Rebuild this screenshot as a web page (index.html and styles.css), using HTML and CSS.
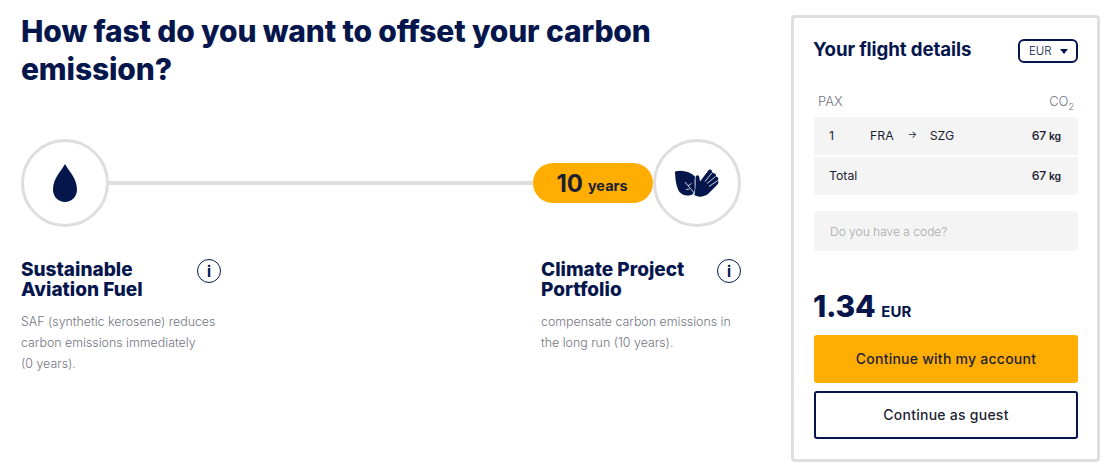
FILE: index.html
```html
<!DOCTYPE html>
<html lang="en">
<head>
<meta charset="utf-8">
<title>Offset</title>
<link rel="stylesheet" href="styles.css">
</head>
<body>
<div class="page">
  <main class="main">
    <h1 class="title">How fast do you want to offset your carbon emission?</h1>
    <div class="slider">
      <div class="circle">
        <svg class="drop" viewBox="0 0 24 38" width="24" height="38"><path d="M12 0C15 6 24 14 24 25.500C24 33 18.500 38 12 38S0 33 0 25.500C0 14 9 6 12 0Z"/></svg>
      </div>
      <div class="track"></div>
      <div class="pill"><span class="pill-num">10</span> <span class="pill-unit">years</span></div>
      <div class="circle">
        <svg class="hands" viewBox="0 0 44 28" width="44" height="28">
          <path d="M0 2.500C7 0.500 15 2.500 20 7.500C19.500 11 19.500 13 19.800 17C20 20.500 19.500 23 18 25C14 27.500 8 27 4.500 23C1 18 0.200 9 0 2.500Z"/>
          <path d="M20.500 8.500C21 5.500 23.800 5.500 24.300 8L25 12.500L33.500 1.300C35.300 -0.300 37.500 1 36.800 3L38.500 4.200C40.500 4 41.500 5.800 40.800 7.500C43 7.500 44 9.800 42.800 11.500C44 13.200 43.500 15 42 16L33.500 24.500C29 28.500 22 28.500 19 25.500C21 21 20.500 14 20.500 8.500Z"/>
          <path class="hands-gap" d="M10 13L20 25M13 17L16.500 14.500M14.500 20L11 20.500M30 12.500L36.800 4M32 14.500L40.500 7.500M34 17.500L42.500 11.800"/>
        </svg>
      </div>
    </div>
    <div class="options">
      <section class="option">
        <div class="option-head">
          <h2 class="option-title">Sustainable Aviation&nbsp;Fuel</h2>
          <span class="info">i</span>
        </div>
        <p class="option-text">SAF (synthetic kerosene) reduces carbon emissions immediately<br>(0 years).</p>
      </section>
      <section class="option">
        <div class="option-head">
          <h2 class="option-title">Climate Project Portfolio</h2>
          <span class="info">i</span>
        </div>
        <p class="option-text">compensate carbon emissions in the long run (10 years).</p>
      </section>
    </div>
  </main>
  <aside class="card">
    <div class="card-head">
      <h2 class="card-title">Your flight details</h2>
      <div class="currency"><span>EUR</span><i class="caret"></i></div>
    </div>
    <div class="labels"><span>PAX</span><span>CO<sub>2</sub></span></div>
    <div class="row">
      <span class="pax">1</span>
      <span class="route">FRA<span class="arrow">→</span>SZG</span>
      <span class="amount">67 <small>kg</small></span>
    </div>
    <div class="row row-total">
      <span class="total">Total</span>
      <span class="amount">67 <small>kg</small></span>
    </div>
    <div class="code">Do you have a code?</div>
    <div class="price"><span class="price-num">1.34</span> <span class="price-cur">EUR</span></div>
    <a class="btn btn-primary">Continue with my account</a>
    <a class="btn btn-secondary">Continue as guest</a>
  </aside>
</div>
</body>
</html>
```
FILE: styles.css
```css
* { box-sizing: border-box; }
html, body { margin: 0; padding: 0; background: #fff; }
body { font-family: Inter, "Liberation Sans", sans-serif; color: #05164d; width: 1113px; height: 475px; overflow: hidden; }
.page { display: flex; align-items: flex-start; padding: 12px 13px 0 21px; gap: 50px; }
.main { width: 720px; flex: none; }
.title { margin: 0; font-size: 30px; line-height: 38px; font-weight: 800; letter-spacing: -0.15px; max-width: 660px; }
.slider { display: flex; align-items: center; margin-top: 51px; }
.circle { width: 88px; height: 88px; flex: none; border: 3px solid #dedede; border-radius: 50%; display: flex; align-items: center; justify-content: center; background: #fff; }
.drop { fill: #05164d; }
.hands { fill: #05164d; overflow: visible; }
.hands-gap { fill: none; stroke: #fff; stroke-width: 0.800; }
.track { flex: 1; height: 4px; background: #dedede; }
.pill { width: 120px; height: 40px; flex: none; background: #ffad00; border-radius: 20px; display: flex; align-items: center; justify-content: center; gap: 5px; font-weight: 700; color: #1c1f33; padding-right: 2px; }
.pill-num { font-size: 24px; }
.pill-unit { font-size: 14.500px; padding-top: 5px; }
.options { display: flex; justify-content: space-between; margin-top: 32px; }
.option { width: 200px; }
.option-head { display: flex; justify-content: space-between; align-items: flex-start; }
.option-title { margin: 1px 0 0; font-size: 19px; line-height: 20px; font-weight: 800; width: 150px; }
.info { width: 24px; height: 24px; border: 1.500px solid #05164d; border-radius: 50%; display: flex; align-items: center; justify-content: center; font-size: 15px; font-weight: 700; }
.option-text { margin: 11px 0 0; font-size: 12.400px; line-height: 21px; color: #747682; font-weight: 300; width: 210px; }
.card { width: 309px; height: 447px; flex: none; margin-top: 3px; border: 3px solid #dedede; border-radius: 4px; padding: 20px 19px 0 20px; background: #fff; }
.card-head { display: flex; justify-content: space-between; align-items: center; height: 26px; }
.card-title { margin: 0 0 4px -1px; font-size: 18.700px; font-weight: 700; letter-spacing: -0.1px; }
.currency { width: 60px; height: 24px; border: 2px solid #05164d; border-radius: 6px; display: flex; align-items: center; justify-content: space-between; padding: 0 8px 0 9px; font-size: 11.500px; font-weight: 300; }
.caret { width: 0; height: 0; border-left: 4px solid transparent; border-right: 4px solid transparent; border-top: 5px solid #05164d; }
.labels { display: flex; justify-content: space-between; padding: 0 4px; margin-top: 27px; height: 26px; font-size: 13px; font-weight: 300; color: #747682; line-height: 20px; }
.labels sub { font-size: 9px; line-height: 0; }
.row { display: flex; align-items: center; height: 38px; background: #f4f4f4; border-radius: 4px 4px 0 0; padding: 0 16px 2px 15px; font-size: 12.300px; font-weight: 400; color: #1c1f33; }
.row-total { margin-top: 2px; border-radius: 0 0 4px 4px; }
.pax { width: 41px; }
.route { display: flex; }
.arrow { width: 35px; text-align: center; font-size: 10px; margin-left: 1px; }
.amount { margin-left: auto; font-weight: 500; letter-spacing: -0.2px; margin-right: 1px; }
.amount small { font-size: 10.500px; font-weight: 600; }
.code { margin-top: 16px; height: 40px; background: #f4f4f4; border-radius: 4px; padding: 0 16px; display: flex; align-items: center; font-size: 12px; font-weight: 300; color: #a8a8a8; }
.price { margin: 37px 0 0 -1px; height: 36px; display: flex; align-items: baseline; gap: 6px; font-weight: 800; }
.price-num { font-size: 30px; letter-spacing: -0.3px; }
.price-cur { font-size: 15px; font-weight: 700; }
.btn { display: flex; align-items: center; justify-content: center; height: 48px; border-radius: 3px; padding-bottom: 2px; font-size: 14px; font-weight: 500; color: #1c1f33; letter-spacing: 0.25px; }
.btn-primary { margin-top: 11px; background: #ffad00; }
.btn-secondary { margin-top: 8px; border: 2px solid #05164d; background: #fff; }
```
